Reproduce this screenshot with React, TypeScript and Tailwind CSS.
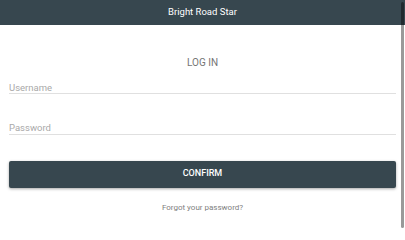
export default function App() {
  return (
    <div className="relative h-[228px] w-[405px] overflow-hidden bg-white font-['Roboto',sans-serif]">
      <header className="flex h-[25px] items-center justify-center bg-[#37474f] text-[9.5px] text-white">
        Bright Road Star
      </header>

      <main className="flex flex-col px-[9px]">
        <h1 className="mt-[32px] text-center text-[10px] leading-[12px] text-[#757575]">LOG IN</h1>

        <input
          type="text"
          placeholder="Username"
          className="mt-[12.5px] h-[12.5px] w-full border-b-[1.5px] border-[#e0e0e0] bg-transparent p-0 text-[9.5px] leading-[11px] text-[#424242] outline-none placeholder:text-[#a9a9a9]"
        />

        <input
          type="password"
          placeholder="Password"
          className="mt-[28px] h-[12.5px] w-full border-b-[1.5px] border-[#e0e0e0] bg-transparent p-0 text-[9.5px] leading-[11px] text-[#424242] outline-none placeholder:text-[#a9a9a9]"
        />

        <button
          type="button"
          className="mt-[26px] flex h-[27px] w-full items-center justify-center rounded-[2px] bg-[#37474f] text-[9px] font-medium text-white shadow-[0_1px_3px_rgba(0,0,0,0.35)]"
        >
          CONFIRM
        </button>

        <p className="mt-[15px] text-center text-[8px] leading-[9px] text-[#808080]">Forgot your password?</p>
      </main>

      <div className="absolute right-[1.5px] top-[2px] bottom-0 w-[2.5px] rounded-full bg-black/40" />
    </div>
  );
}
